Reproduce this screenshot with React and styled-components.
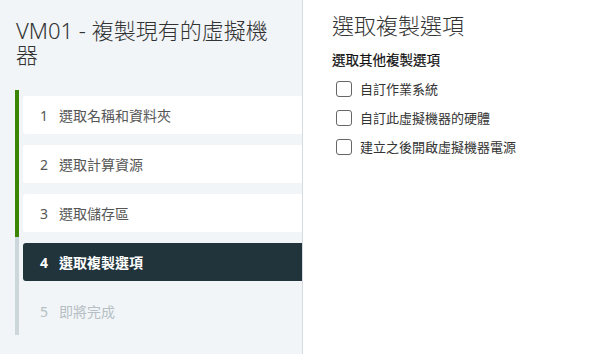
import React from 'react';
import styled, { createGlobalStyle } from 'styled-components';

const GlobalStyle = createGlobalStyle`
  html, body {
    margin: 0;
    padding: 0;
    background: #ffffff;
  }
  body {
    font-family: "Noto Sans", "Noto Sans CJK TC", sans-serif;
  }
`;

const Layout = styled.div`
  display: flex;
  width: 612px;
  height: 354px;
  overflow: hidden;
`;

const Sidebar = styled.div`
  width: 303px;
  box-sizing: border-box;
  background: #f1f5f8;
  border-right: 1px solid #d5dde2;
  padding-top: 18px;
  flex-shrink: 0;
`;

const Title = styled.h1`
  margin: 0 0 24px 16px;
  width: 270px;
  font-size: 22px;
  line-height: 24px;
  font-weight: 300;
  color: #333333;
`;

const StepList = styled.ol`
  list-style: none;
  margin: 0 0 0 15px;
  padding: 0;
`;

const StepItem = styled.li`
  border-left: 4px solid ${(p) => (p.$done ? '#3c8500' : '#ccd6db')};
  padding: 6px 0 5px 4px;
`;

const StepCard = styled.div`
  display: flex;
  align-items: center;
  gap: 12px;
  height: 38px;
  box-sizing: border-box;
  padding-left: 17px;
  border-radius: 3px 0 0 3px;
  font-size: 14px;
  background: ${(p) =>
    p.$state === 'active' ? '#21333b' : p.$state === 'done' ? '#ffffff' : 'transparent'};
  color: ${(p) =>
    p.$state === 'active' ? '#ffffff' : p.$state === 'done' ? '#565656' : '#b6bfc4'};
  font-weight: ${(p) => (p.$state === 'active' ? 700 : 400)};
`;

const StepNum = styled.span`
  width: 7px;
`;

const Main = styled.div`
  flex: 1;
  padding: 13px 0 0 29px;
  color: #333333;
`;

const Heading = styled.h2`
  margin: 0 0 14px;
  font-size: 22px;
  line-height: 24px;
  font-weight: 300;
`;

const SubHeading = styled.div`
  font-size: 13.5px;
  line-height: 18px;
  font-weight: 400;
  color: #111111;
  -webkit-text-stroke: 0.2px #111111;
  margin-bottom: 5px;
`;

const CheckRow = styled.label`
  display: flex;
  align-items: center;
  gap: 8px;
  height: 29px;
  padding-left: 4px;
  font-size: 13px;
  color: #333333;
`;

const Box = styled.span`
  width: 16px;
  height: 16px;
  box-sizing: border-box;
  border: 1px solid #666666;
  border-radius: 3px;
  background: #ffffff;
`;

const steps = [
  { n: 1, label: '選取名稱和資料夾', state: 'done' },
  { n: 2, label: '選取計算資源', state: 'done' },
  { n: 3, label: '選取儲存區', state: 'done' },
  { n: 4, label: '選取複製選項', state: 'active' },
  { n: 5, label: '即將完成', state: 'todo' },
];

const options = ['自訂作業系統', '自訂此虛擬機器的硬體', '建立之後開啟虛擬機器電源'];

export default function App() {
  return (
    <>
      <GlobalStyle />
      <Layout>
        <Sidebar>
          <Title>VM01 - 複製現有的虛擬機器</Title>
          <StepList>
            {steps.map((s) => (
              <StepItem key={s.n} $done={s.state === 'done'}>
                <StepCard $state={s.state}>
                  <StepNum>{s.n}</StepNum>
                  <span>{s.label}</span>
                </StepCard>
              </StepItem>
            ))}
          </StepList>
        </Sidebar>
        <Main>
          <Heading>選取複製選項</Heading>
          <SubHeading>選取其他複製選項</SubHeading>
          {options.map((o) => (
            <CheckRow key={o}>
              <Box />
              <span>{o}</span>
            </CheckRow>
          ))}
        </Main>
      </Layout>
    </>
  );
}
